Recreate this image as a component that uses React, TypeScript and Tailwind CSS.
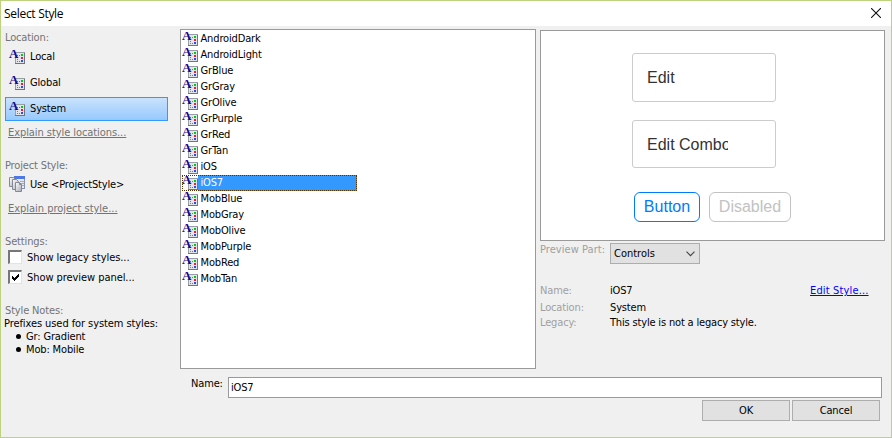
import type { ReactNode } from 'react';

const styles = [
  'AndroidDark', 'AndroidLight', 'GrBlue', 'GrGray', 'GrOlive', 'GrPurple', 'GrRed', 'GrTan',
  'iOS', 'iOS7', 'MobBlue', 'MobGray', 'MobOlive', 'MobPurple', 'MobRed', 'MobTan',
];

function StyleIcon() {
  return (
    <svg width="16" height="16" viewBox="0 0 16 16" className="block shrink-0 overflow-visible" shapeRendering="crispEdges">
      <rect x="6" y="3" width="10" height="12" fill="#9a9da6" />
      <rect x="7" y="4" width="8" height="10" fill="#e4e5e9" />
      <rect x="15" y="4" width="1" height="11" fill="#70747e" />
      <rect x="6" y="14" width="10" height="1" fill="#70747e" />
      <path d="M8 6h1v1h-1zM10 6h1v1h-1zM8 8h1v1h-1zM8 10h1v1h-1zM8 12h1v1h-1zM10 12h1v1h-1z" fill="#777a82" />
      <rect x="12" y="5" width="2" height="2" fill="#00c818" />
      <rect x="12" y="8" width="2" height="2" fill="#e8202a" />
      <rect x="12" y="11" width="2" height="2" fill="#2350f5" />
      <text x="0" y="9" fontFamily="'Liberation Serif', serif" fontWeight="bold" fontSize="13" letterSpacing="0" fill="#190a91">A</text>
    </svg>
  );
}

function ProjectIcon() {
  return (
    <svg width="16" height="16" viewBox="0 0 16 16" className="block shrink-0">
      <defs>
        <linearGradient id="page" x1="0" y1="0" x2="1" y2="1">
          <stop offset="0" stopColor="#ffffff" />
          <stop offset="1" stopColor="#a5a9b2" />
        </linearGradient>
      </defs>
      <rect x="5.500" y="0.500" width="10" height="12" fill="#e6e9f2" stroke="#8b93ab" />
      <rect x="5" y="0" width="11" height="3" fill="#4d78e6" />
      <path d="M11 5.500h4M11 7.500h4M11 9.500h4" stroke="#a4acc2" />
      <path d="M.5 1.500h4l2 2v7h-6z" fill="url(#page)" stroke="#858995" />
      <path d="M3.500 3.500h4l2 2v8h-6z" fill="url(#page)" stroke="#858995" />
      <path d="M6.500 6.500h4l2 2v7h-6z" fill="url(#page)" stroke="#858995" />
      <path d="M10.500 6.500v2h2" fill="none" stroke="#858995" />
    </svg>
  );
}

function LocationItem({ children, selected }: { children: ReactNode; selected?: boolean }) {
  return (
    <div
      className={
        'flex h-6 w-[163px] items-center gap-[5px] border pl-[3px] ' +
        (selected ? 'border-[#3399ff] bg-linear-to-b from-[#c9e2fc] to-[#97c9fd]' : 'border-transparent')
      }
    >
      <StyleIcon />
      <span className="pb-[2px]">{children}</span>
    </div>
  );
}

function CheckRow({ children, checked }: { children: ReactNode; checked?: boolean }) {
  return (
    <div className="flex h-5 items-center gap-[5px] pl-[3px] tracking-[-0.06px]">
      <span className="flex size-[14px] items-center justify-center border-t-2 border-l-2 border-r border-b border-t-[#777] border-l-[#777] border-r-[#e3e3e3] border-b-[#e3e3e3] bg-white">
        {checked && (
          <svg width="9" height="9" viewBox="0 0 9 9" shapeRendering="crispEdges">
            <path d="M1 3h1v1h1v1h1v-1h1v-1h1v-1h1v-1h1v3h-1v1h-1v1h-1v1h-1v1h-1v-1h-1v-1h-1z" fill="#000" />
          </svg>
        )}
      </span>
      <span>{children}</span>
    </div>
  );
}

export default function App() {
  return (
    <div className="flex h-[438px] w-[892px] flex-col overflow-hidden border border-[#bdd27f] bg-[#f0f0f0] font-['DejaVu_Sans_Condensed','DejaVu_Sans',sans-serif] text-[11px] leading-[13px] tracking-[-0.15px] whitespace-nowrap text-black">
      <header className="flex h-[25px] shrink-0 items-center justify-between bg-white pr-[10px] pb-px pl-[3px] font-['Open_Sans','Noto_Sans',sans-serif] text-[12px] tracking-[-0.3px]">
        <span>Select Style</span>
        <svg width="10" height="10" viewBox="0 0 10 10">
          <path d="M0 0L10 10M10 0L0 10" stroke="#111" strokeWidth="1.100" />
        </svg>
      </header>

      <div className="flex h-[343px] shrink-0">
        <aside className="flex w-[179px] shrink-0 flex-col pt-[3px] pl-1">
          <h2 className="h-4 leading-[18px] text-[#737373]">Location:</h2>
          <div className="flex flex-col gap-[2px]">
            <LocationItem>Local</LocationItem>
            <LocationItem>Global</LocationItem>
            <LocationItem selected>System</LocationItem>
          </div>
          <a className="mt-1 h-4 pl-[3px] leading-4 tracking-[-0.07px] text-[#737373]">
            <span className="underline">Explain style locations...</span>
          </a>
          <h2 className="mt-[17px] h-4 leading-4 text-[#737373]">Project Style:</h2>
          <div className="-mt-[2px] flex h-6 items-center gap-[5px] pl-1">
            <ProjectIcon />
            <span>Use &lt;ProjectStyle&gt;</span>
          </div>
          <a className="mt-[5px] h-4 pl-[3px] leading-4 tracking-[-0.02px] text-[#737373]">
            <span className="underline">Explain project style...</span>
          </a>
          <h2 className="mt-[18px] h-3 leading-[14px] text-[#737373]">Settings:</h2>
          <CheckRow>Show legacy styles...</CheckRow>
          <CheckRow checked>Show preview panel...</CheckRow>
          <h2 className="mt-[17px] text-[#737373]">Style Notes:</h2>
          <p className="-ml-px tracking-[-0.08px]">Prefixes used for system styles:</p>
          <ul>
            {['Gr: Gradient', 'Mob: Mobile'].map((note) => (
              <li key={note} className="flex items-center gap-[5px] pl-[11px]">
                <span className="size-[5px] rounded-full bg-black" />
                {note}
              </li>
            ))}
          </ul>
        </aside>

        <section className="mt-[3px] h-[340px] w-[356px] shrink-0 border border-[#9a9a9a] bg-white pt-px pl-px">
          {styles.map((name) => (
            <div key={name} className="relative flex h-4 w-[175px] items-center">
              <StyleIcon />
              <span
                className={
                  'flex h-4 flex-1 items-center pb-[2px] pl-[2.500px] ' +
                  (name === 'iOS7' ? 'bg-[#3399ff] text-white' : '')
                }
              >
                {name}
              </span>
              {name === 'iOS7' && (
                <span className="absolute inset-0 border border-dotted border-[#5a3000]" />
              )}
            </div>
          ))}
        </section>

        <section className="ml-1 flex w-[345px] flex-col pt-1">
          <div className="flex h-[211px] w-[345px] shrink-0 flex-col border border-[#9a9a9a] bg-white pt-[22px] pl-[91px] font-['Liberation_Sans',Arial,sans-serif] text-[16px] leading-6 tracking-normal text-[#333]">
            <div className="h-[49px] w-[144px] rounded-[3px] border border-[#ccc] px-[14px] py-[12px]">Edit</div>
            <div className="mt-[18px] h-[48px] w-[144px] rounded-[3px] border border-[#ccc] px-[14px] py-[12px]">
              <div className="w-[81px] overflow-hidden">Edit Combo</div>
            </div>
            <div className="mt-6 flex gap-[9px] pl-[2px]">
              <div className="flex h-[30px] w-[66px] items-center justify-center rounded-[6px] border border-[#007aff] pb-px text-[#007aff]">Button</div>
              <div className="flex h-[30px] w-[82px] items-center justify-center rounded-[6px] border border-[#c2c2c2] pb-px text-[#c2c2c2]">Disabled</div>
            </div>
          </div>
          <div className="mt-[2px] flex">
            <span className="w-[70px] text-[#a0a0a0] tracking-[0.05px]">Preview Part:</span>
            <div className="flex h-[21px] w-[90px] items-center justify-between border border-[#adadad] bg-[#e1e1e1] pr-1 pl-[3px] tracking-[0px]">
              <span>Controls</span>
              <svg width="9" height="6" viewBox="0 0 9 6">
                <path d="M.5 .7L4.500 4.700L8.500 .7" fill="none" stroke="#444" strokeWidth="1.100" />
              </svg>
            </div>
          </div>
          <div className="mt-5 flex h-[17px]">
            <span className="w-[70px] text-[#a0a0a0]">Name:</span>
            <span className="w-[200px]">iOS7</span>
            <a className="tracking-[0.15px] text-[#0000ff] underline">Edit Style...</a>
          </div>
          <div className="flex h-[15px]">
            <span className="w-[70px] text-[#a0a0a0]">Location:</span>
            <span>System</span>
          </div>
          <div className="flex h-[15px]">
            <span className="w-[70px] text-[#a0a0a0]">Legacy:</span>
            <span className="tracking-[-0.17px]">This style is not a legacy style.</span>
          </div>
        </section>
      </div>

      <div className="mt-2 flex h-[21px] shrink-0 pl-[190px]">
        <label className="w-[37px]">Name:</label>
        <div className="flex w-[654px] items-center border border-[#9a9a9a] bg-white pl-[2px]">iOS7</div>
      </div>
      <div className="mt-[2px] flex h-[21px] shrink-0 gap-[2px] pl-[701px]">
        <button className="w-[88px] border border-[#adadad] bg-[#e1e1e1]">OK</button>
        <button className="w-[88px] border border-[#adadad] bg-[#e1e1e1]">Cancel</button>
      </div>
    </div>
  );
}
